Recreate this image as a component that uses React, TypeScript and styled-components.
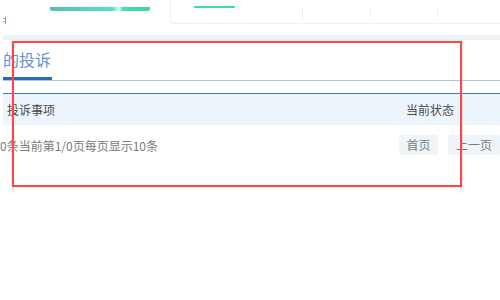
import React from 'react';
import styled, { createGlobalStyle } from 'styled-components';

const GlobalStyle = createGlobalStyle`
  html, body {
    margin: 0;
    padding: 0;
    background: #ffffff;
    overflow: hidden;
  }
  body {
    font-family: "Noto Sans CJK SC", "Noto Sans", sans-serif;
    color: #333;
  }
`;

const Page = styled.div`
  position: relative;
  width: 600px;
  height: 300px;
`;

const TopBar = styled.div`
  display: flex;
  height: 35px;
`;

const Side = styled.div`
  width: 170px;
  display: flex;
  flex-direction: column;
`;

const GradientBar = styled.div`
  margin: 7px 0 0 50px;
  width: 100px;
  height: 4px;
  border-radius: 0 0 2px 2px;
  background: linear-gradient(
    90deg,
    #55c0b5 0%,
    #4fe0d0 62%,
    #d6fff4 69%,
    #42e0b0 73%,
    #36d99a 100%
  );
`;

/* the right edge of a scrolled-off label: one stem with two ticks */
const GlyphStub = styled.div`
  position: relative;
  margin: 6px 0 0 5px;
  width: 1px;
  height: 7px;
  background: #7d9fd8;

  &::before,
  &::after {
    content: '';
    position: absolute;
    left: -2px;
    width: 2px;
    height: 1px;
    background: #9db6e2;
  }
  &::before {
    top: 1px;
  }
  &::after {
    top: 4px;
  }
`;

const Panel = styled.div`
  flex: 1;
  height: 23px;
  display: flex;
  border-left: 1px solid #e4f6f1;
  border-bottom: 1px solid #e4f6f1;
  border-bottom-left-radius: 4px;
`;

const PanelCell = styled.div<{ $w?: number }>`
  width: ${p => (p.$w ? `${p.$w}px` : 'auto')};
  flex: ${p => (p.$w ? 'none' : 1)};
  display: flex;
  justify-content: space-between;
`;

const GreenBar = styled.div`
  margin: 6px 0 0 23px;
  width: 41px;
  height: 2px;
  border-radius: 0 0 1px 1px;
  background: #3ddcae;
`;

const Divider = styled.div`
  margin-top: 7px;
  width: 1px;
  height: 12px;
  background: #e0f6f0;
`;

const GrayStrip = styled.div`
  margin-left: 3px;
  height: 5px;
  background: #eef2f6;
`;

const TabBar = styled.div`
  margin-left: 3px;
  height: 40px;
  display: flex;
  border-bottom: 1px solid #a9c5e3;
`;

const Tab = styled.div<{ $active?: boolean }>`
  width: 49px;
  height: 37px;
  line-height: 38px;
  font-size: 16px;
  color: #6990cc;
  border-bottom: 3px solid ${p => (p.$active ? '#2b6ab5' : 'transparent')};
  white-space: nowrap;
  overflow: hidden;
`;

const Table = styled.div`
  margin: 12px 0 0 3px;
  border-top: 1px solid #3d79c6;
`;

const HeadRow = styled.div`
  display: flex;
  height: 31px;
  align-items: center;
  background: #edf5fc;
  font-size: 12px;
  color: #4a4a4a;
`;

const HeadCell = styled.div<{ $w?: number }>`
  flex: ${p => (p.$w ? 'none' : 1)};
  width: ${p => (p.$w ? `${p.$w}px` : 'auto')};
  padding-left: 4px;
`;

const Pager = styled.div`
  display: flex;
  align-items: center;
  margin-top: 10px;
  height: 20px;
`;

const PagerInfo = styled.div`
  width: 399px;
  margin-left: -3px;
  font-size: 12px;
  color: #7a7a7a;
  white-space: nowrap;
`;

const PageButton = styled.div<{ $w: number }>`
  width: ${p => p.$w}px;
  height: 20px;
  margin-right: 10px;
  line-height: 20px;
  text-align: center;
  font-size: 12px;
  color: #7d7d7d;
  background: #eef4f8;
  border-radius: 2px;
`;

const Annotation = styled.div`
  position: absolute;
  left: 12px;
  top: 41px;
  width: 446px;
  height: 142px;
  border: 2px solid #ff4545;
  box-shadow: 0 0 1px #ff8080;
  pointer-events: none;
`;

const App = () => {
  return (
    <Page>
      <GlobalStyle />
      <TopBar>
        <Side>
          <GradientBar />
          <GlyphStub />
        </Side>
        <Panel>
          <PanelCell $w={132}>
            <GreenBar />
            <Divider />
          </PanelCell>
          <PanelCell $w={68}>
            <span />
            <Divider />
          </PanelCell>
          <PanelCell $w={67}>
            <span />
            <Divider />
          </PanelCell>
          <PanelCell />
        </Panel>
      </TopBar>
      <GrayStrip />
      <TabBar>
        <Tab $active>的投诉</Tab>
      </TabBar>
      <Table>
        <HeadRow>
          <HeadCell>投诉事项</HeadCell>
          <HeadCell $w={194}>当前状态</HeadCell>
        </HeadRow>
        <Pager>
          <PagerInfo>0条当前第1/0页每页显示10条</PagerInfo>
          <PageButton $w={39}>首页</PageButton>
          <PageButton $w={52}>上一页</PageButton>
        </Pager>
      </Table>
      <Annotation />
    </Page>
  );
};

export default App;
